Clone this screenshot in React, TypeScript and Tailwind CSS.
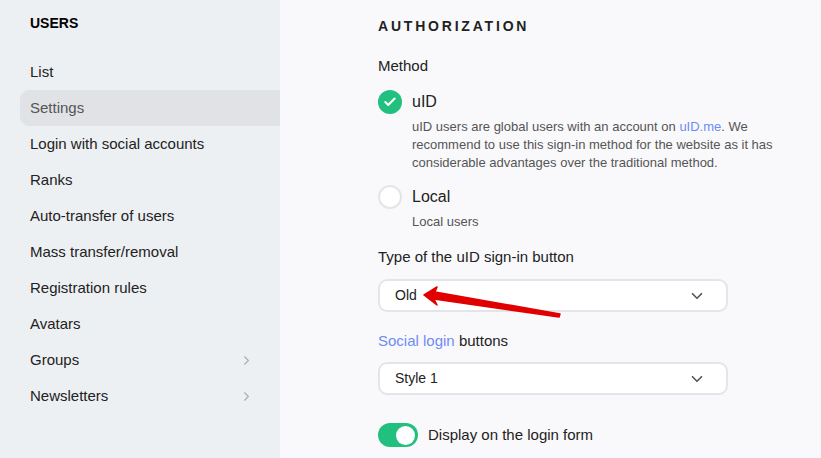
import { ChevronDown, ChevronRight, Check } from "lucide-react";

const font = { fontFamily: '"Liberation Sans", Arial, sans-serif' };

const menu = [
  { label: "List" },
  { label: "Settings", active: true },
  { label: "Login with social accounts" },
  { label: "Ranks" },
  { label: "Auto-transfer of users" },
  { label: "Mass transfer/removal" },
  { label: "Registration rules" },
  { label: "Avatars" },
  { label: "Groups", sub: true },
  { label: "Newsletters", sub: true },
];

function Select({ value }: { value: string }) {
  return (
    <div className="w-[350px] h-[33px] flex items-center justify-between pl-[15px] pr-[20px] bg-white border-2 border-[#e4e5e8] rounded-[9px] text-[14px] text-[#222]">
      <span>{value}</span>
      <ChevronDown size={18} strokeWidth={2.2} className="text-[#555]" />
    </div>
  );
}

export default function App() {
  return (
    <div className="flex w-[821px] h-[458px] overflow-hidden bg-[#f9f9fb] text-[#222]" style={font}>
      {/* sidebar */}
      <aside className="w-[280px] shrink-0 bg-[#edf0f2] pl-[20px] pt-[14px]">
        <div className="pl-[10px] h-[18px] text-[14px] font-bold text-black leading-[18px]">USERS</div>
        <nav className="mt-[22px] flex flex-col">
          {menu.map((m) => (
            <div
              key={m.label}
              className={
                "h-[36px] flex items-center justify-between pl-[10px] pr-[26px] text-[15px] rounded-l-[9px] " +
                (m.active ? "bg-[#e1e2e5] text-[#555]" : "text-[#222]")
              }
            >
              <span>{m.label}</span>
              {m.sub && <ChevronRight size={15} strokeWidth={1.8} className="text-[#a8acb3]" />}
            </div>
          ))}
        </nav>
      </aside>

      {/* main */}
      <main className="relative flex-1 pl-[98px] pt-[17px]">
        <h2 className="text-[14px] font-bold tracking-[0.2em] text-[#222] leading-[18px]">AUTHORIZATION</h2>
        <div className="mt-[22px] text-[15px] leading-[18px]">Method</div>

        <div className="mt-[15px] flex items-center gap-[10px]">
          <span className="w-[24px] h-[24px] rounded-full bg-[#22c07e] flex items-center justify-center">
            <Check size={14} strokeWidth={3.5} className="text-white" />
          </span>
          <span className="text-[16px]">uID</span>
        </div>
        <p className="ml-[34px] mt-[4px] w-[370px] text-[13px] leading-[18px] text-[#555]">
          uID users are global users with an account on <span className="text-[#6e8cf5]">uID.me</span>. We recommend to
          use this sign-in method for the website as it has considerable advantages over the traditional method.
        </p>

        <div className="mt-[13px] flex items-center gap-[10px]">
          <span className="w-[24px] h-[24px] rounded-full bg-white border-2 border-[#e4e5e8]" />
          <span className="text-[16px]">Local</span>
        </div>
        <p className="ml-[34px] mt-[4px] text-[13px] leading-[18px] text-[#555]">Local users</p>

        <div className="mt-[17px] text-[15px] leading-[18px]">Type of the uID sign-in button</div>
        <div className="mt-[13px]">
          <Select value="Old" />
        </div>

        <div className="mt-[20px] text-[15px] leading-[18px]">
          <span className="text-[#6e8cf5]">Social login</span> buttons
        </div>
        <div className="mt-[12px]">
          <Select value="Style 1" />
        </div>

        <div className="mt-[28px] flex items-center gap-[10px]">
          <span className="w-[40px] h-[24px] rounded-full bg-[#22c07e] flex items-center justify-end pr-[3px]">
            <span className="w-[19px] h-[19px] rounded-full bg-white" />
          </span>
          <span className="text-[15px]">Display on the login form</span>
        </div>

        {/* red annotation arrow */}
        <svg className="absolute left-[141px] top-[285px]" width="145" height="36" viewBox="0 0 145 36">
          <path
            d="M3 10 L16 2 L14 7 L139 29 L138 32 L13 14 L16 20 Z"
            fill="#e00000"
            stroke="#e00000"
            strokeWidth="1.5"
            strokeLinejoin="round"
          />
        </svg>
      </main>
    </div>
  );
}
